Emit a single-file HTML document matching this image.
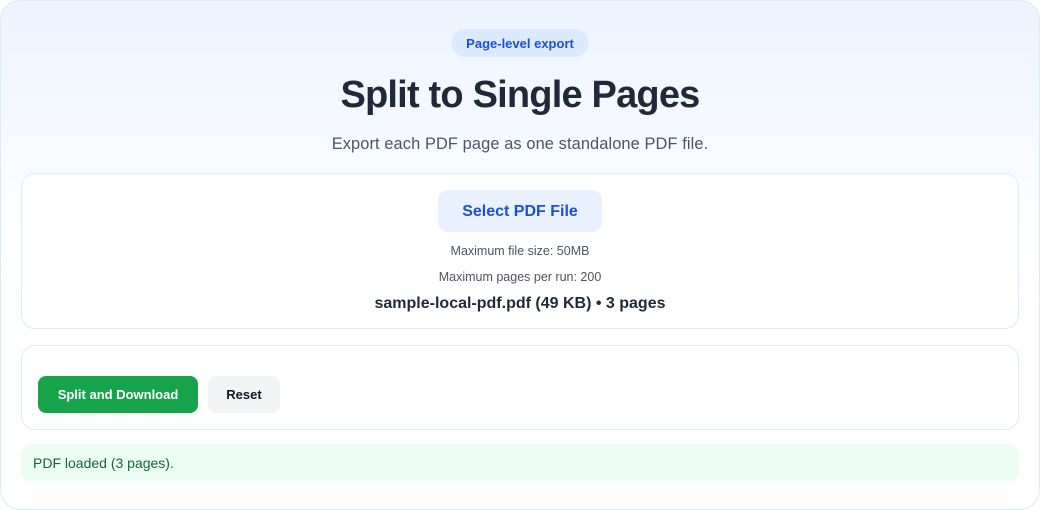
<!DOCTYPE html>
<html><head><style>
*{margin:0;padding:0;box-sizing:border-box}
body{width:1040px;height:510px;background:#fff;font-family:"Liberation Sans",sans-serif;position:relative;overflow:hidden}
.card{position:absolute;left:0;top:0;width:1040px;height:510px;border:1px solid #dbeafe;border-radius:20px;background:linear-gradient(180deg,#edf4ff 0%,#fbfdff 40%,#fff 60%)}
.abs{position:absolute}
.c{left:0;width:1040px;text-align:center}
.panel{position:absolute;left:21px;width:998px;background:#fff;border:1px solid #dbeafe;border-radius:14px}
</style></head><body>
<div class="card"></div>
<div class="abs" style="left:451px;top:29px;width:138px;height:28px;background:#dbeafe;border-radius:14px;color:#1d4ed8;font-weight:bold;font-size:13px;line-height:29px;text-align:center">Page-level export</div>
<div class="abs c" style="top:71px;font-size:38px;font-weight:bold;color:#1f2937;line-height:48px;letter-spacing:-0.8px">Split to Single Pages</div>
<div class="abs c" style="top:134px;font-size:16.4px;color:#4b5563;line-height:20px;letter-spacing:0.1px">Export each PDF page as one standalone PDF file.</div>
<div class="panel" style="top:173px;height:156px"></div>
<div class="abs" style="left:438px;top:190px;width:164px;height:42px;background:#eaf1fe;border-radius:10px;color:#1d4ed8;font-weight:bold;font-size:16px;line-height:44px;text-align:center">Select PDF File</div>
<div class="abs c" style="top:243px;font-size:12.5px;color:#4b5563;line-height:16px">Maximum file size: 50MB</div>
<div class="abs c" style="top:269px;font-size:12.5px;color:#4b5563;line-height:16px">Maximum pages per run: 200</div>
<div class="abs c" style="top:294px;font-size:16px;font-weight:bold;color:#1f2937;line-height:20px">sample-local-pdf.pdf (49 KB) • 3 pages</div>
<div class="panel" style="top:345px;height:85px"></div>
<div class="abs" style="left:38px;top:376px;width:160px;height:37px;background:#16a34a;border-radius:8px;color:#fff;font-weight:bold;font-size:13px;line-height:37px;text-align:center">Split and Download</div>
<div class="abs" style="left:208px;top:376px;width:72px;height:37px;background:#f3f4f6;border-radius:8px;color:#111827;font-weight:bold;font-size:13px;line-height:37px;text-align:center">Reset</div>
<div class="abs" style="left:21px;top:444px;width:998px;height:37px;background:#ecfdf3;border-radius:10px;color:#166534;font-size:14px;line-height:39px;padding-left:12px">PDF loaded (3 pages).</div>
</body></html>
